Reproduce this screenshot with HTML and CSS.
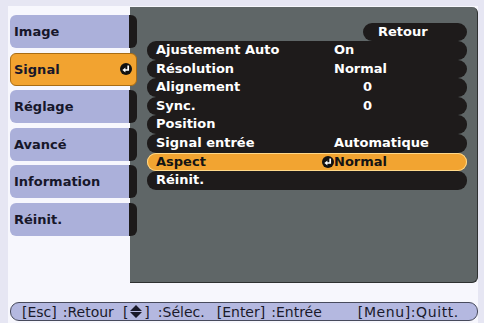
FILE: index.html
```html
<!DOCTYPE html>
<html lang="fr">
<head>
    <meta charset="UTF-8">
    <meta name="viewport" content="width=device-width, initial-scale=1.0">
    <title>Signal</title>
    <link rel="stylesheet" href="styles.css">
</head>
<body>
    <div class="screen">
        <div class="main">
            <ul class="tabs">
                <li class="tab">Image</li>
                <li class="tab active">Signal
                    <svg class="enter" viewBox="0 0 12 12" width="12" height="12">
                        <circle cx="6" cy="6" r="6" fill="#111"/>
                        <path d="M8.2 2.6 V7 H4.6" fill="none" stroke="#fff" stroke-width="1.7"/>
                        <path d="M5.4 4.6 L2.4 7 L5.4 9.4 Z" fill="#fff"/>
                    </svg>
                </li>
                <li class="tab">Réglage</li>
                <li class="tab">Avancé</li>
                <li class="tab">Information</li>
                <li class="tab">Réinit.</li>
            </ul>

            <div class="panel">
                <div class="back">Retour</div>
                <div class="rows">
                    <div class="row"><span class="label">Ajustement Auto</span><span class="value">On</span></div>
                    <div class="row"><span class="label">Résolution</span><span class="value">Normal</span></div>
                    <div class="row"><span class="label">Alignement</span><span class="value num">0</span></div>
                    <div class="row"><span class="label">Sync.</span><span class="value num">0</span></div>
                    <div class="row"><span class="label">Position</span><span class="value"></span></div>
                    <div class="row"><span class="label">Signal entrée</span><span class="value">Automatique</span></div>
                    <div class="row selected"><span class="label">Aspect</span>
                        <span class="value">
                            <svg class="enter mark" viewBox="0 0 12 12" width="12" height="12">
                                <circle cx="6" cy="6" r="6" fill="#111"/>
                                <path d="M8.2 2.6 V7 H4.6" fill="none" stroke="#fff" stroke-width="1.7"/>
                                <path d="M5.4 4.6 L2.4 7 L5.4 9.4 Z" fill="#fff"/>
                            </svg>Normal</span>
                    </div>
                    <div class="row"><span class="label">Réinit.</span><span class="value"></span></div>
                </div>
            </div>
        </div>

        <!-- key help: bracket part and action part are placed separately -->
        <div class="help">
            <span class="key">[Esc]</span><span class="act a1">:Retour</span>
            <span class="key k2">[<svg class="updown" viewBox="0 0 12 13" width="12" height="13"><path d="M6 0 L12 6 H0 Z M0 7 H12 L6 13 Z" fill="#1a1a2a"/></svg>]</span><span class="act a2">:Sélec.</span>
            <span class="key k3">[Enter]</span><span class="act a3">:Entrée</span>
            <span class="key k4">[Menu]:Quitt.</span>
        </div>
    </div>
</body>
</html>
```

FILE: styles.css
```css
body {
    margin: 0;
    background: #e6e6f3;
    font-family: "DejaVu Sans", sans-serif;
}

.screen {
    margin: 6px 6px 0 8px;
    height: 317px;
    background: #f7f7fd;
    box-sizing: border-box;
    padding-top: 1px;
}

.main {
    display: flex;
    height: 276px;
}

/* left menu */
.tabs {
    list-style: none;
    width: 127px;
    margin: 8px -7px 0 2px;
    padding: 0;
    display: flex;
    flex-direction: column;
    gap: 4.5px;
    position: relative;
    z-index: 1;
}

.tab {
    height: 33px;
    box-sizing: border-box;
    display: flex;
    align-items: center;
    justify-content: space-between;
    padding-left: 4px;
    background: #abb0da;
    border-right: 8px solid #1c1a1a;
    border-radius: 6px;
    font-size: 13px;
    font-weight: bold;
    color: #17172a;
}

.tab.active {
    background: #f2a330;
    border: 1px solid #a86c14;
    padding: 0 4px 0 3px;
}

.enter {
    display: block;
}

/* right panel */
.panel {
    flex: 1;
    background: #5f6667;
    border-right: 1px solid #2e3131;
    border-bottom: 1px solid #2e3131;
    border-radius: 0 6px 6px 0;
    padding: 16px 10px 0 17px;
    box-sizing: border-box;
}

.back {
    width: 104px;
    height: 18px;
    margin-left: 216px;
    box-sizing: border-box;
    padding-left: 15px;
    background: #1e1b1b;
    border-radius: 9px;
    color: #fff;
    font-size: 13px;
    font-weight: bold;
    line-height: 18px;
}

.row {
    display: grid;
    grid-template-columns: 187px 1fr;
    height: 18.6px;
    line-height: 18.6px;
    background: #1e1b1b;
    border-radius: 9px;
    color: #fff;
    font-size: 13px;
    font-weight: bold;
}

.label {
    padding-left: 9px;
}

.value {
    display: flex;
    align-items: center;
}

.value.num {
    padding-left: 29px;
}

.row.selected {
    background: #f2a431;
    box-shadow: inset 0 0 0 1px #ffd98a;
    color: #141414;
}

.mark {
    margin-left: -12px;
}

/* help bar */
.help {
    margin: 19px 0 0 2px;
    height: 19px;
    box-sizing: border-box;
    background: #b4b8e0;
    border: 1px solid #474a5c;
    border-radius: 9px;
    display: flex;
    align-items: center;
    padding-left: 11px;
    font-size: 14px;
    color: #1a1a2a;
    white-space: nowrap;
}

.key {
    display: flex;
    align-items: center;
}

.a1 {
    margin-left: 6px;
}

.k2 {
    margin-left: 9px;
}

.updown {
    margin: 0 2px;
}

.a2 {
    margin-left: 8px;
}

.k3 {
    margin-left: 12px;
}

.a3 {
    margin-left: 6px;
}

.k4 {
    margin-left: 36px;
    letter-spacing: 0.6px;
}
```
